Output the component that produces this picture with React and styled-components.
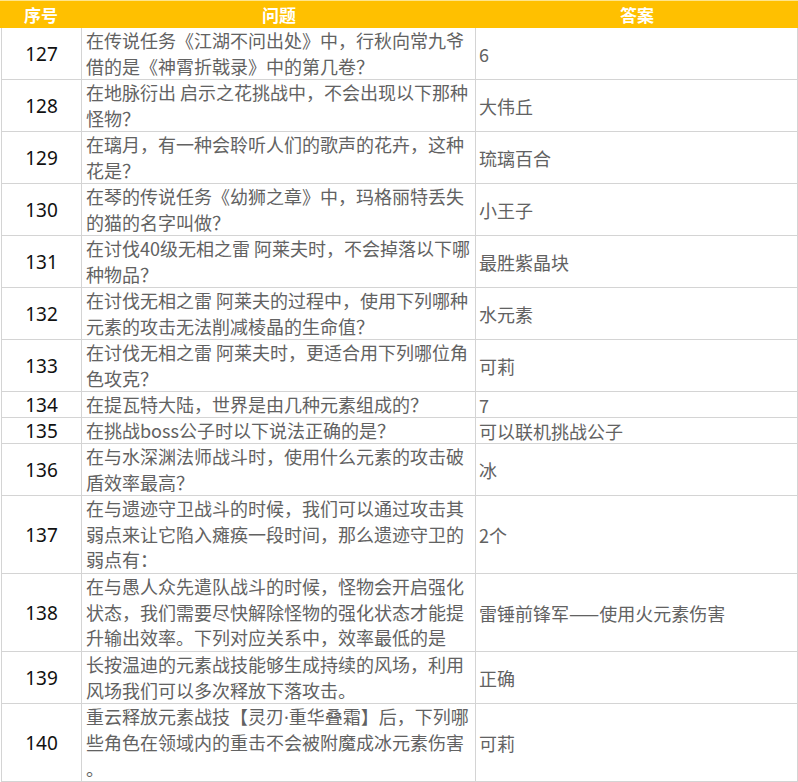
import React from "react";
import styled, { createGlobalStyle } from "styled-components";

const GlobalStyle = createGlobalStyle`
  html, body {
    margin: 0;
    padding: 0;
    background: #ffffff;
  }
  body {
    font-family: "Noto Sans CJK SC", "Noto Sans", sans-serif;
  }
`;

const Table = styled.div`
  width: 797px;
  margin-left: 1px;
  display: flex;
  flex-direction: column;
`;

const HeaderRow = styled.div`
  display: grid;
  grid-template-columns: 82px 394px 322px;
  height: 28px;
  width: 798px;
  margin-left: -1px;
  background: #ffc000;
  border-top: 1px solid #ffe58a;
  box-sizing: border-box;
`;

const HeaderCell = styled.div`
  display: flex;
  align-items: center;
  justify-content: center;
  color: #ffffff;
  font-weight: 700;
  font-size: 17px;
  line-height: 26px;
`;

const Row = styled.div`
  display: grid;
  grid-template-columns: 81px 394px 322px;
  height: ${(p) => p.$lines * 26}px;
  box-sizing: border-box;
  border-bottom: 1px solid #d4d4d4;
`;

const Cell = styled.div`
  box-sizing: border-box;
  border-right: 1px solid #d4d4d4;
  display: flex;
  flex-direction: column;
  justify-content: center;
  overflow: hidden;
`;

const NumCell = styled(Cell)`
  border-left: 1px solid #d4d4d4;
  align-items: center;
  font-family: "Noto Sans", "Open Sans", sans-serif;
  font-size: 19px;
  color: #111111;
`;

const QuestionCell = styled(Cell)`
  padding-left: 4px;
  color: #626262;
  font-size: 18px;
  line-height: 25.5px;
`;

const Line = styled.span`
  display: block;
  white-space: nowrap;
`;

const NarrowDot = styled.span`
  font-family: "Noto Sans", "DejaVu Sans", sans-serif;
`;

const AnswerCell = styled(Cell)`
  padding-left: 3px;
  color: #626262;
  font-size: 18px;
  line-height: 26px;
  white-space: nowrap;
`;

const rows = [
  {
    n: 127,
    q: ["在传说任务《江湖不问出处》中，行秋向常九爷", "借的是《神霄折戟录》中的第几卷？"],
    a: "6",
  },
  {
    n: 128,
    q: ["在地脉衍出 启示之花挑战中，不会出现以下那种", "怪物？"],
    a: "大伟丘",
  },
  {
    n: 129,
    q: ["在璃月，有一种会聆听人们的歌声的花卉，这种", "花是？"],
    a: "琉璃百合",
  },
  {
    n: 130,
    q: ["在琴的传说任务《幼狮之章》中，玛格丽特丢失", "的猫的名字叫做？"],
    a: "小王子",
  },
  {
    n: 131,
    q: ["在讨伐40级无相之雷 阿莱夫时，不会掉落以下哪", "种物品？"],
    a: "最胜紫晶块",
  },
  {
    n: 132,
    q: ["在讨伐无相之雷 阿莱夫的过程中，使用下列哪种", "元素的攻击无法削减棱晶的生命值？"],
    a: "水元素",
  },
  {
    n: 133,
    q: ["在讨伐无相之雷 阿莱夫时，更适合用下列哪位角", "色攻克？"],
    a: "可莉",
  },
  {
    n: 134,
    q: ["在提瓦特大陆，世界是由几种元素组成的？"],
    a: "7",
  },
  {
    n: 135,
    q: ["在挑战boss公子时以下说法正确的是？"],
    a: "可以联机挑战公子",
  },
  {
    n: 136,
    q: ["在与水深渊法师战斗时，使用什么元素的攻击破", "盾效率最高？"],
    a: "冰",
  },
  {
    n: 137,
    q: [
      "在与遗迹守卫战斗的时候，我们可以通过攻击其",
      "弱点来让它陷入瘫痪一段时间，那么遗迹守卫的",
      "弱点有：",
    ],
    a: "2个",
  },
  {
    n: 138,
    q: [
      "在与愚人众先遣队战斗的时候，怪物会开启强化",
      "状态，我们需要尽快解除怪物的强化状态才能提",
      "升输出效率。下列对应关系中，效率最低的是",
    ],
    a: "雷锤前锋军——使用火元素伤害",
  },
  {
    n: 139,
    q: ["长按温迪的元素战技能够生成持续的风场，利用", "风场我们可以多次释放下落攻击。"],
    a: "正确",
  },
  {
    n: 140,
    q: [
      "重云释放元素战技【灵刃·重华叠霜】后，下列哪",
      "些角色在领域内的重击不会被附魔成冰元素伤害",
      "。",
    ],
    a: "可莉",
  },
];

function renderLine(text) {
  const parts = text.split("·");
  return parts.map((part, i) => (
    <React.Fragment key={i}>
      {i > 0 && <NarrowDot>·</NarrowDot>}
      {part}
    </React.Fragment>
  ));
}

export default function App() {
  return (
    <>
      <GlobalStyle />
      <Table>
        <HeaderRow>
          <HeaderCell>序号</HeaderCell>
          <HeaderCell>问题</HeaderCell>
          <HeaderCell>答案</HeaderCell>
        </HeaderRow>
        {rows.map((r) => (
          <Row key={r.n} $lines={r.q.length}>
            <NumCell>{r.n}</NumCell>
            <QuestionCell>
              {r.q.map((line, i) => (
                <Line key={i}>{renderLine(line)}</Line>
              ))}
            </QuestionCell>
            <AnswerCell>{r.a}</AnswerCell>
          </Row>
        ))}
      </Table>
    </>
  );
}
